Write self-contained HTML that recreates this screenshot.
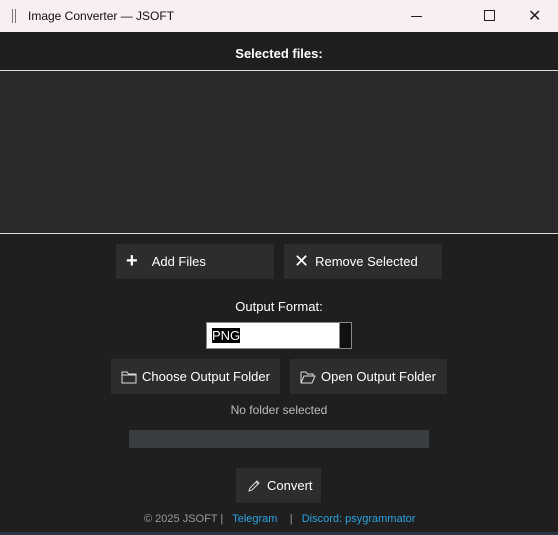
<!DOCTYPE html>
<html><head><style>
*{margin:0;padding:0;box-sizing:border-box}
body{width:558px;height:535px;background:#1f1f1f;font-family:"Liberation Sans","DejaVu Sans",sans-serif;position:relative;overflow:hidden;color:#fff}
.a{position:absolute}
.title{left:0;top:0;width:558px;height:32px;background:#f9eef1;color:#111;font-size:12px}
.btn{background:#2d2d2e;font-size:13px;color:#fff;display:flex;align-items:center}
.c{text-align:center;width:558px;left:0}
</style></head><body>
<div class="a title">
 <div class="a" style="left:12px;top:9px;width:1px;height:14px;background:#777"></div>
 <div class="a" style="left:15px;top:9px;width:1px;height:14px;background:#777"></div>
 <div class="a" style="left:28px;top:9px">Image Converter — JSOFT</div>
 <div class="a" style="left:411px;top:16px;width:11px;height:1px;background:#222"></div>
 <div class="a" style="left:484px;top:10px;width:11px;height:11px;border:1px solid #222"></div>
 <div class="a" style="left:528px;top:6px;font-size:16px;color:#222">✕</div>
</div>
<div class="a c" style="top:46px;font-size:13px;font-weight:bold">Selected files:</div>
<div class="a" style="left:0;top:70px;width:558px;height:164px;background:#2a2a2c;border-top:1px solid #ddd;border-bottom:1px solid #ddd"></div>
<div class="a btn" style="left:116px;top:244px;width:158px;height:35px"><span style="font-size:20px;font-weight:bold;margin-left:10px;margin-right:14px">+</span>Add Files</div>
<div class="a btn" style="left:284px;top:244px;width:158px;height:35px"><span style="font-size:18px;font-weight:bold;margin-left:10px;margin-right:6px">✕</span>Remove Selected</div>
<div class="a c" style="top:299px;font-size:13px">Output Format:</div>
<div class="a" style="left:206px;top:322px;width:146px;height:27px;background:#fff;border:1px solid #888">
 <span class="a" style="left:5px;top:5px;background:#000;color:#fff;font-size:13px;line-height:15px">PNG</span>
 <div class="a" style="right:0;top:0;width:12px;height:25px;background:#111;border-left:1px solid #888"></div>
</div>
<div class="a btn" style="left:111px;top:359px;width:169px;height:35px"><svg width="16" height="14" style="margin-left:10px;margin-right:5px" viewBox="0 0 16 14"><path d="M1 2h5l1.5 2H15v9H1z M1 5h14" fill="none" stroke="#ddd"/></svg>Choose Output Folder</div>
<div class="a btn" style="left:290px;top:359px;width:157px;height:35px"><svg width="16" height="14" style="margin-left:10px;margin-right:5px" viewBox="0 0 16 14"><path d="M1 2h5l1.5 2H13v2 M1 2v11h11l3-7H4L1 13" fill="none" stroke="#ddd"/></svg>Open Output Folder</div>
<div class="a c" style="top:403px;font-size:12px;color:#bbb">No folder selected</div>
<div class="a" style="left:129px;top:430px;width:300px;height:18px;background:#3a3d40"></div>
<div class="a btn" style="left:236px;top:468px;width:85px;height:35px"><svg width="14" height="14" style="margin-left:11px;margin-right:6px" viewBox="0 0 14 14"><path d="M2 12l1-3 7-7 2 2-7 7z M9 3l2 2" fill="none" stroke="#ddd"/></svg>Convert</div>
<div class="a" style="left:144px;top:513px;font-size:11px;color:#999;white-space:nowrap">© 2025 JSOFT | &nbsp; <span style="color:#2aa3e0">Telegram</span> &nbsp;&nbsp; | &nbsp; <span style="color:#2aa3e0">Discord: psygrammator</span></div>
<div class="a" style="left:0;top:532px;width:558px;height:3px;background:#2a3442"></div>
</body></html>
